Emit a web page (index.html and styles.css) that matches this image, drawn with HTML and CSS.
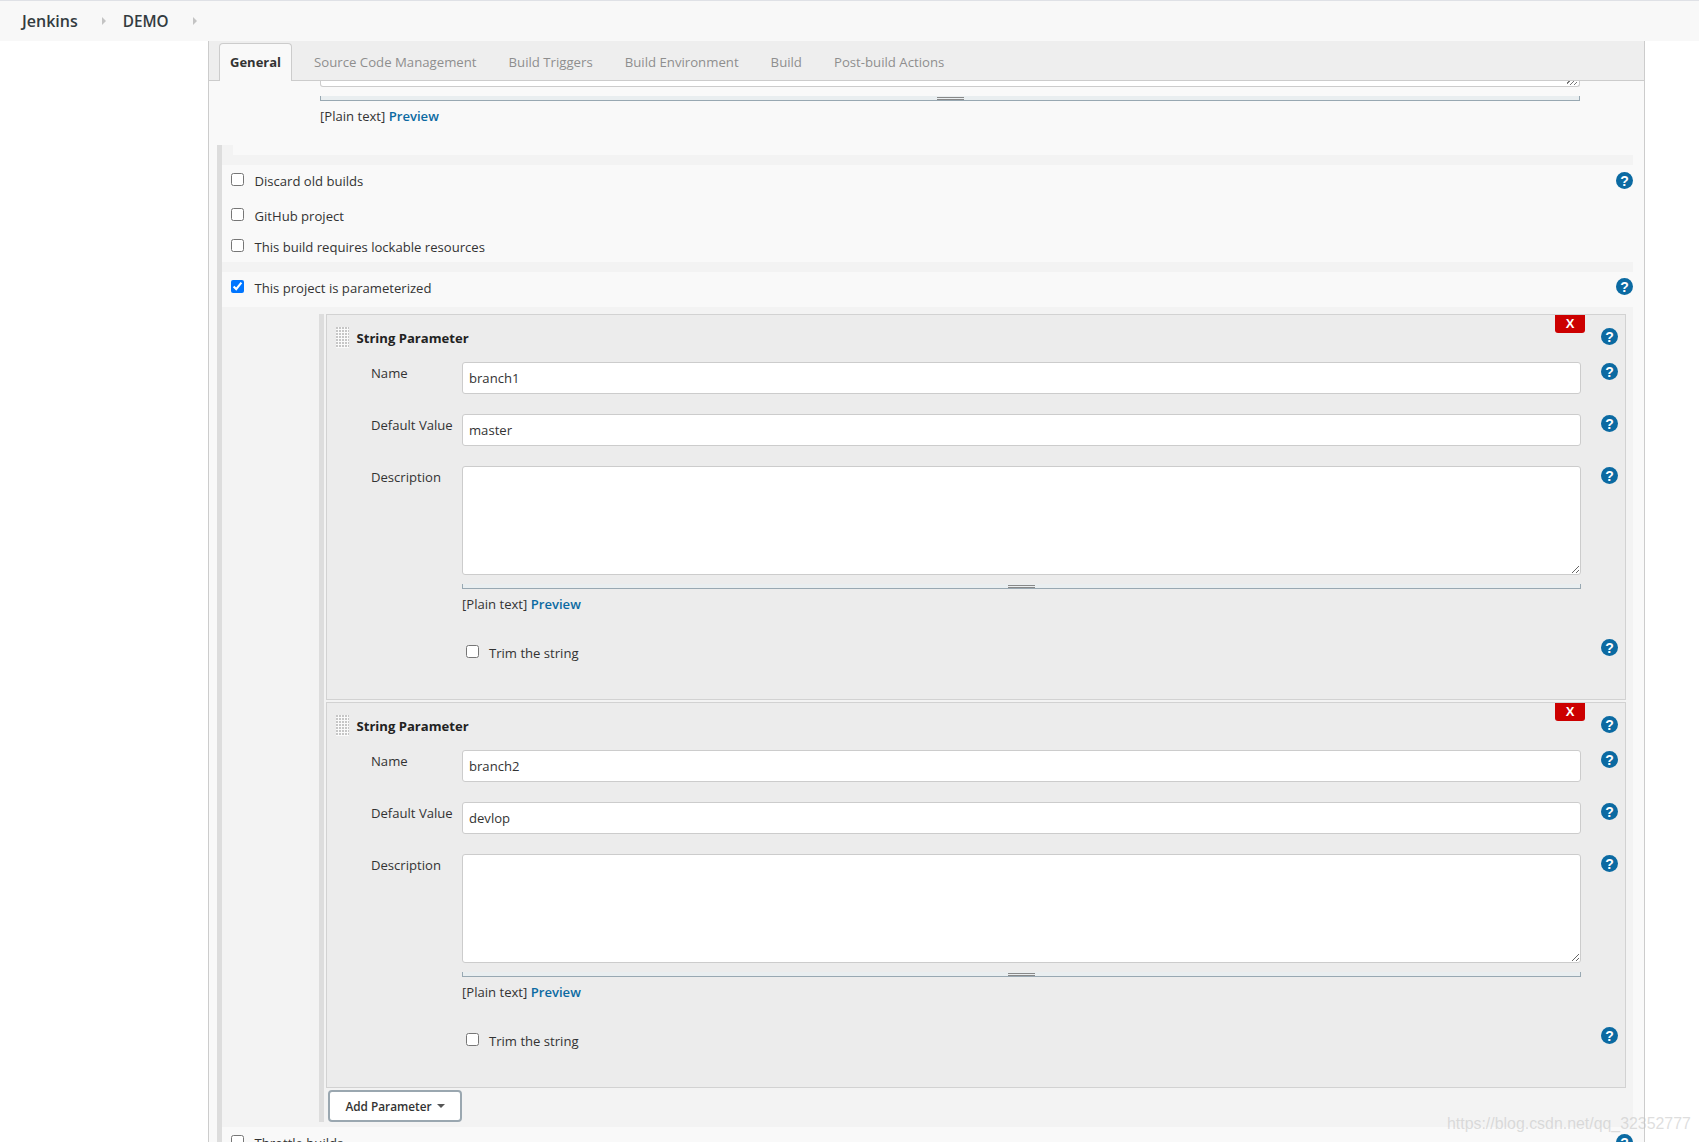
FILE: index.html
```html
<!DOCTYPE html>
<html lang="en">
<head>
<meta charset="utf-8">
<title>DEMO Config - Jenkins</title>
<link rel="stylesheet" href="styles.css">
</head>
<body>
<svg class="defs" width="0" height="0" aria-hidden="true"><defs>
<symbol id="help" viewBox="0 0 17 17"><circle cx="8.5" cy="8.5" r="8.5" fill="#0b6aa2"/><text x="8.5" y="13.5" text-anchor="middle" font-family="Liberation Sans, sans-serif" font-weight="700" font-size="14" fill="#fff">?</text></symbol>
</defs></svg>
<header class="crumbs">
  <a class="crumb">Jenkins</a><span class="crumb-arrow"></span>
  <a class="crumb crumb-second">DEMO</a><span class="crumb-arrow"></span>
</header>
<main class="panel">
  <nav class="tabs">
    <a class="tab tab-active">General</a>
    <a class="tab">Source Code Management</a>
    <a class="tab">Build Triggers</a>
    <a class="tab">Build Environment</a>
    <a class="tab">Build</a>
    <a class="tab">Post-build Actions</a>
  </nav>
  <div class="project-desc">
    <div class="stub"></div>
    <div class="grip"><span class="grip-lines"></span></div>
    <div class="plain-line">[Plain text] <a class="preview">Preview</a></div>
  </div>
  <section class="section">
    <div class="band-top"><span class="band-notch"></span></div>
    <div class="band"></div>
    <div class="opt-row opt-first"><input type="checkbox"><label>Discard old builds</label><svg class="help help-top"><use href="#help"/></svg></div>
    <div class="opt-row opt-short"><input type="checkbox"><label>GitHub project</label></div>
    <div class="opt-row opt-short"><input type="checkbox"><label>This build requires lockable resources</label></div>
    <div class="band"></div>
    <div class="opt-row opt-first"><input type="checkbox" checked><label>This project is parameterized</label><svg class="help help-param"><use href="#help"/></svg></div>
    <div class="nested">
      <div class="repeat">
        <div class="chunk">
          <button class="del" type="button">X</button>
          <div class="chunk-head"><span class="drag"></span><b class="chunk-title">String Parameter</b><svg class="help help-head"><use href="#help"/></svg></div>
          <div class="form-row"><span class="form-label">Name</span><input class="field" type="text" value="branch1"><svg class="help"><use href="#help"/></svg></div>
          <div class="form-row"><span class="form-label">Default Value</span><input class="field" type="text" value="master"><svg class="help"><use href="#help"/></svg></div>
          <div class="form-row form-row-desc"><span class="form-label">Description</span>
            <div class="desc-cell"><textarea class="area"></textarea><div class="grip grip-inner"><span class="grip-lines"></span></div><div class="plain-line plain-inner">[Plain text] <a class="preview">Preview</a></div></div>
            <svg class="help"><use href="#help"/></svg></div>
          <div class="form-row form-row-trim"><span></span><div class="trim"><input type="checkbox"><label>Trim the string</label></div><svg class="help"><use href="#help"/></svg></div>
        </div>
        <div class="chunk">
          <button class="del" type="button">X</button>
          <div class="chunk-head"><span class="drag"></span><b class="chunk-title">String Parameter</b><svg class="help help-head"><use href="#help"/></svg></div>
          <div class="form-row"><span class="form-label">Name</span><input class="field" type="text" value="branch2"><svg class="help"><use href="#help"/></svg></div>
          <div class="form-row"><span class="form-label">Default Value</span><input class="field" type="text" value="devlop"><svg class="help"><use href="#help"/></svg></div>
          <div class="form-row form-row-desc"><span class="form-label">Description</span>
            <div class="desc-cell"><textarea class="area"></textarea><div class="grip grip-inner"><span class="grip-lines"></span></div><div class="plain-line plain-inner">[Plain text] <a class="preview">Preview</a></div></div>
            <svg class="help"><use href="#help"/></svg></div>
          <div class="form-row form-row-trim"><span></span><div class="trim"><input type="checkbox"><label>Trim the string</label></div><svg class="help"><use href="#help"/></svg></div>
        </div>
        <button class="add" type="button">Add Parameter<span class="caret"></span></button>
      </div>
    </div>
    <div class="opt-row opt-first"><input type="checkbox"><label>Throttle builds</label><svg class="help help-top"><use href="#help"/></svg></div>
  </section>
</main>
<div class="watermark">https://blog.csdn.net/qq_32352777</div>
</body>
</html>
```
FILE: styles.css
```css
html, body { margin: 0; height: 1142px; overflow: hidden; background: #fff; }
body { font-family: "Open Sans", "Noto Sans", sans-serif; font-size: 13.1px; color: #333; position: relative; }
.defs { position: absolute; }

.crumbs { height: 40px; box-sizing: content-box; border-top: 1px solid #dfe1e6; background: #f8f8f8; display: flex; align-items: center; padding-left: 22px; }
.crumb { font-size: 16px; font-weight: 600; color: #333b40; }
.crumb-second { margin-left: 17px; font-size: 15.3px; }
.crumb-arrow { width: 0; height: 0; border-left: 4px solid #c4c4c4; border-top: 4px solid transparent; border-bottom: 4px solid transparent; margin-left: 24px; }

.panel { margin-left: 208px; width: 1435px; border-left: 1px solid #ccc; border-right: 1px solid #ccc; background: #f9f9f9; height: 1101px; }

.tabs { height: 37px; padding: 2px 0 0 10px; background: #eee; border-bottom: 1px solid #ccc; display: flex; gap: 10px; }
.tab { padding: 0 11px; height: 38px; line-height: 38px; box-sizing: border-box; color: #8e8e8e; font-size: 13.2px; }
.tab-active { background: #f9f9f9; border: 1px solid #ccc; border-bottom: 0; border-radius: 4px 4px 0 0; color: #333; font-weight: 700; font-size: 13px; line-height: 37px; padding: 0 10px; margin-right: 1px; }

.project-desc { padding-left: 111px; height: 64px; }
.stub { width: 1258px; height: 5px; background: #fff repeating-linear-gradient(135deg, transparent 0 2px, #777 2px 3px) no-repeat right 2px bottom 1px / 10px 5px; border: 1px solid #ccc; border-top: 0; border-radius: 0 0 3px 3px; }
.grip { position: relative; width: 1258px; height: 4px; margin-top: 9px; background: #e9eef0; border: 1px solid #98a8b2; border-top: 0; display: flex; justify-content: center; align-items: flex-end; }
.grip-lines { width: 27px; height: 1px; border-top: 1px solid #888; border-bottom: 1px solid #888; }
.plain-line { line-height: 16px; margin-top: 7px; }
.preview { color: #0b6aa2; font-weight: 600; }

.section { margin: 0 11px 0 8px; border-left: 5px solid #ddd; }
.band-top { height: 10px; }
.band-notch { display: block; width: 11px; height: 10px; background: #f3f3f3; }
.band { height: 10px; background: #f3f3f3; }

.opt-row { display: flex; align-items: flex-start; padding: 8px 0 0 9px; box-sizing: border-box; line-height: 16px; }
.opt-first { height: 35px; }
.opt-short { height: 31px; }
.opt-row input, .trim input { width: 13px; height: 13px; margin: 0; flex: none; }
.opt-row label { margin-left: 10.5px; }
.help { width: 17px; height: 17px; flex: none; display: block; }
.help-top { margin: -1px 0 0 auto; }
.help-param { margin: -2px 0 0 auto; }

.nested { background: #f3f3f3; padding: 7px 7px 5px 97px; }
.repeat { border-left: 5px solid #ddd; padding-left: 2px; }
.chunk { position: relative; border: 1px solid #d2d2d2; background: #ececec; margin-bottom: 2px; padding-bottom: 38px; }
.del { position: absolute; top: 0; right: 40px; width: 30px; height: 18px; padding: 0; border: 0; border-radius: 0 0 3px 3px; background: #c00; color: #fff; font: 700 13px/18px "Liberation Sans", sans-serif; }
.chunk-head { height: 47px; display: flex; align-items: flex-start; box-sizing: border-box; padding: 12px 7px 0 9px; }
.drag { width: 13px; height: 21px; background-color: #fafafa; background-image: radial-gradient(circle at 1px 1px, #c6c6c6 1px, transparent 1px); background-size: 3px 3px; }
.chunk-title { margin-left: 7.5px; line-height: 22px; color: #222; font-weight: 700; }
.help-head { margin: 1px 0 0 auto; }

.form-row { display: grid; grid-template-columns: 91px 1119px 17px; column-gap: 0; padding: 0 6px 0 44px; margin-bottom: 20px; }
.form-row .help { margin: 1px 0 0 20px; }
.form-label { margin-top: 3px; line-height: 16px; }
.field { box-sizing: border-box; width: 1119px; height: 32px; margin: 0; padding: 0 6px; border: 1px solid #ccc; border-radius: 3px; background: #fff; font: 13.1px "Open Sans", "Noto Sans", sans-serif; color: #333; }
.form-row-desc { margin-bottom: 28px; }
.desc-cell { width: 1119px; }
.area { display: block; box-sizing: border-box; width: 1119px; height: 109px; margin: 0; border: 1px solid #ccc; border-radius: 3px; background: #fff; resize: vertical; }
.grip-inner { width: 1117px; margin-top: 9px; }
.plain-inner { margin-top: 7px; }
.form-row-trim { margin-bottom: 0; }
.trim { display: flex; align-items: flex-start; padding: 5px 0 0 4px; line-height: 16px; }
.trim label { margin-left: 10px; }
.form-row-trim .help { margin-top: -1px; }

.add { display: flex; align-items: center; justify-content: center; box-sizing: border-box; width: 134px; height: 32px; margin: 0 0 0 2px; padding: 0; border: 2px solid #9aa7b0; border-radius: 4px; background: #fff; color: #333; font: 600 11.8px "Open Sans", "Noto Sans", sans-serif; }
.caret { width: 0; height: 0; margin-left: 5px; border-top: 4px solid #555; border-left: 4px solid transparent; border-right: 4px solid transparent; }

.watermark { position: absolute; left: 1447px; top: 1114px; font: 15.9px/20px "Liberation Sans", sans-serif; color: rgba(190,190,190,.5); white-space: nowrap; }
```
